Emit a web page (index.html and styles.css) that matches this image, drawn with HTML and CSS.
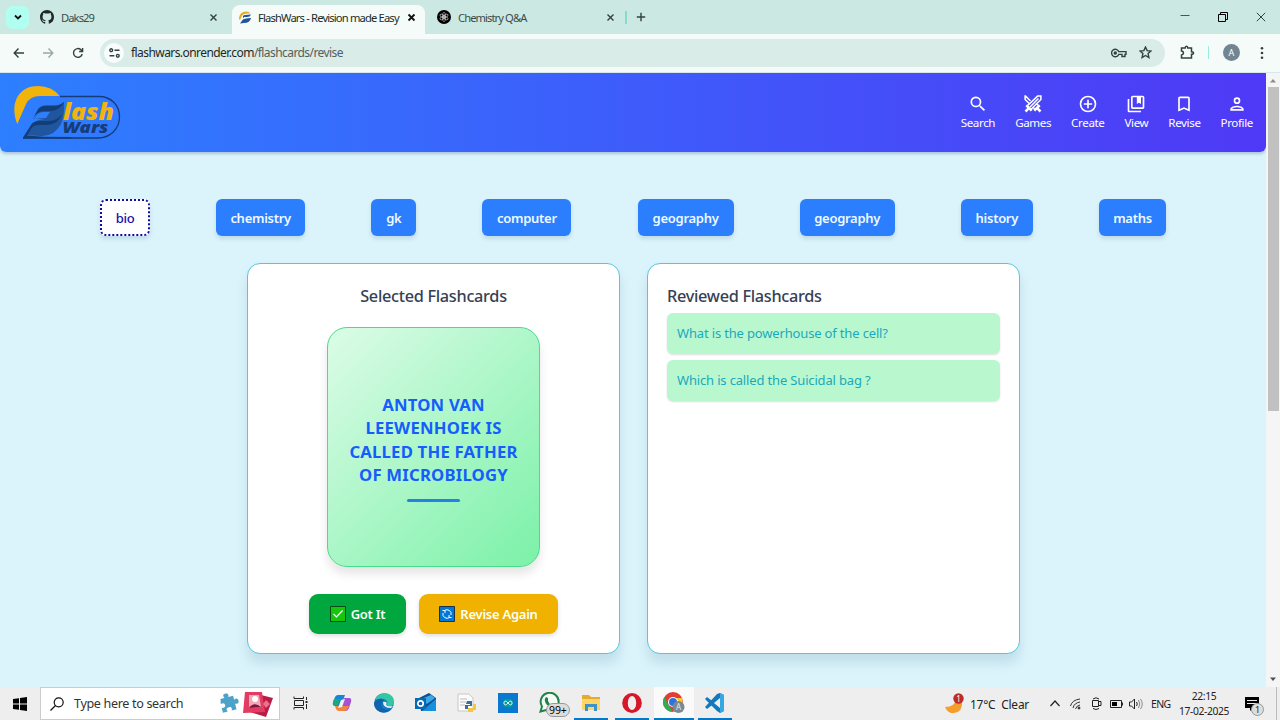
FILE: index.html
```html
<!DOCTYPE html>
<html lang="en">
<head>
<meta charset="utf-8">
<title>FlashWars - Revision made Easy</title>
<link rel="stylesheet" href="styles.css">
</head>
<body>
<div class="screen">
  <header class="tabstrip">
    <div class="tab-menu"><svg width="10" height="10" viewBox="0 0 10 10" class="line thick"><path d="M2 3.5 5 6.5 8 3.5"/></svg></div>
    <div class="tab tab-first">
      <svg width="14" height="14" viewBox="0 0 16 16"><path fill="#1f2928" d="M8 0C3.58 0 0 3.58 0 8c0 3.54 2.29 6.53 5.47 7.59.4.07.55-.17.55-.38 0-.19-.01-.82-.01-1.49-2.01.37-2.53-.49-2.69-.94-.09-.23-.48-.94-.82-1.13-.28-.15-.68-.52-.01-.53.63-.01 1.08.58 1.23.82.72 1.21 1.87.87 2.33.66.07-.52.28-.87.51-1.07-1.78-.2-3.64-.89-3.64-3.95 0-.87.31-1.59.82-2.15-.08-.2-.36-1.02.08-2.12 0 0 .67-.21 2.2.82a7.6 7.6 0 0 1 4 0c1.53-1.04 2.2-.82 2.2-.82.44 1.1.16 1.92.08 2.12.51.56.82 1.27.82 2.15 0 3.07-1.87 3.75-3.65 3.95.29.25.54.73.54 1.48 0 1.07-.01 1.93-.01 2.2 0 .21.15.46.55.38A8 8 0 0 0 16 8c0-4.42-3.58-8-8-8"/></svg>
      <span class="tab-title t-daks">Daks29</span>
      <svg class="line close" width="9" height="9" viewBox="0 0 9 9"><path d="M1.5 1.5 7.5 7.5M7.5 1.5 1.5 7.5"/></svg>
    </div>
    <div class="tab tab-active">
      <svg width="13" height="13" viewBox="0 0 13 13"><path fill="#e5ae29" d="M0 8C0 2 5-1 10 1L11 2.500Q5 2 3.500 4L1 9Z"/><path fill="#24549b" d="M4 5Q5 3.500 12 3.500 11 6 8 6H5L4 7.500ZM1 12.500 3.500 9Q4.500 7.500 12 7 11 12 5 12Z"/></svg>
      <span class="tab-title t-flash">FlashWars - Revision made Easy</span>
      <svg class="line close thick" width="9" height="9" viewBox="0 0 9 9"><path d="M1.5 1.5 7.5 7.5M7.5 1.5 1.5 7.5"/></svg>
    </div>
    <div class="tab tab-last">
      <svg width="14" height="14" viewBox="0 0 14 14"><circle cx="7" cy="7" r="7" fill="#000"/><g fill="none" stroke="#ccc" stroke-width=".6"><ellipse cx="7" cy="5.400" rx="1.500" ry="3"/><ellipse cx="7" cy="5.400" rx="1.500" ry="3" transform="rotate(60 7 7)"/><ellipse cx="7" cy="5.400" rx="1.500" ry="3" transform="rotate(120 7 7)"/><ellipse cx="7" cy="5.400" rx="1.500" ry="3" transform="rotate(180 7 7)"/><ellipse cx="7" cy="5.400" rx="1.500" ry="3" transform="rotate(240 7 7)"/><ellipse cx="7" cy="5.400" rx="1.500" ry="3" transform="rotate(300 7 7)"/></g></svg>
      <span class="tab-title t-chem">Chemistry Q&amp;A</span>
      <svg class="line close" width="9" height="9" viewBox="0 0 9 9"><path d="M1.5 1.5 7.5 7.5M7.5 1.5 1.5 7.5"/></svg>
    </div>
    <i class="tab-sep"></i>
    <svg class="line new-tab" width="10" height="10" viewBox="0 0 10 10"><path d="M5 .8V9.2M.8 5H9.2"/></svg>
    <div class="window-buttons">
      <svg width="10" height="10" viewBox="0 0 10 10" fill="none" stroke="#485653"><path d="M.5 3.5H9.5"/></svg>
      <svg width="10" height="10" viewBox="0 0 10 10" fill="none" stroke="#000"><path d="M.5 2.500H7.500V9.500H.5ZM2.500 2.500V.5H9.500V7.500H7.500"/></svg>
      <svg width="10" height="10" viewBox="0 0 10 10" fill="none" stroke="#35413f"><path d="M.8.8 9.2 9.2M9.2.8.8 9.2"/></svg>
    </div>
  </header>

  <div class="toolbar">
    <svg class="line" width="12" height="12" viewBox="0 0 12 12"><path d="M11 6H1.5M5.5 1.5 1.2 6 5.5 10.5"/></svg>
    <svg class="line faded" width="12" height="12" viewBox="0 0 12 12"><path d="M1 6H10.5M6.5 1.5 10.8 6 6.5 10.5"/></svg>
    <svg class="line reload" width="12" height="12" viewBox="0 0 12 12"><path d="M10.2 7A4.4 4.4 0 1 1 9 2.8L10.4 4.2M10.6 1V4.5H7.1"/></svg>
    <div class="omnibox">
      <div class="site-info"><svg class="line" width="11" height="10" viewBox="0 0 11 10"><circle cx="2.2" cy="2.2" r="1.4"/><path d="M5.5 2.2H10.5M.5 7.8H5.3"/><circle cx="8.8" cy="7.8" r="1.4"/></svg></div>
      <span class="url">flashwars.onrender.com<span>/flashcards/revise</span></span>
      <svg class="line key" width="16" height="10" viewBox="0 0 16 10"><path d="M7.7 3.6A3.700 3.700 0 1 0 7.7 6.4H11V8.5H14V6.4H15V3.6Z"/><circle cx="4.3" cy="5" r="1" fill="#33413e"/></svg>
      <svg class="line" width="13" height="13" viewBox="0 0 13 13"><path d="m6.5 1 1.6 3.6 3.9.4-2.9 2.6.8 3.9-3.4-2-3.4 2 .8-3.9L1 5l3.9-.4Z"/></svg>
    </div>
    <svg class="line ext" width="15" height="15" viewBox="0 0 15 15"><path stroke-width="1.500" d="M1.500 3H5.200Q5.200 1.200 6.500 1.200T7.800 3H11.500V6.700Q13.500 6.700 13.500 8T11.500 9.300V13H1.500V9.900Q3.500 9.600 3.500 8T1.500 6.100Z"/></svg>
    <i class="tool-sep"></i>
    <b class="avatar">A</b>
    <svg class="dots" width="4" height="14" viewBox="0 0 4 14" fill="#33413e"><circle cx="2" cy="2.2" r="1.3"/><circle cx="2" cy="7" r="1.3"/><circle cx="2" cy="11.8" r="1.3"/></svg>
  </div>

  <div class="viewport">
    <main class="page">
      <nav class="navbar">
        <svg class="logo" width="110" height="56" viewBox="0 0 110 56">
          <path fill="#f2b40b" d="M5.300 40C-2 23 4 2 26 2Q40 2 47.500 12H28Q18 12 14 20Z"/>
          <path fill="none" stroke="#143c78" stroke-width="1.300" d="M48 12.500H87C99 12.500 107.500 21 107.500 33S98 54 86 54H11"/>
          <path fill="#20569e" d="M14 51 22 39Q24 36 32 35H22L28 26 45 24.500 52 18Q53 30 49 40 42 53 28 52Z"/>
          <path fill="#2d7ffb" d="M22 36 25 30.500Q27 28 31 28H38L34 34Q24 34 22 36Z"/>
          <path fill="#123d79" d="M20.500 35.500 25.500 26Q28 21.500 34 21.500H43Q48 21.500 52.500 17.500 48 26 40 27H32Q25 27 20.500 35.500ZM11 53.500 19 41Q21 37 28 37H37Q45 37 50 30 46 41 35 41H27Q21 41 19 45L15 51.500 32 52.800 60 53 58 54.500H11Z"/>
          <text x="51" y="36" textLength="51" lengthAdjust="spacingAndGlyphs" class="logo-text" font-size="23" fill="#f2b40b">lash</text>
          <text x="50.500" y="49.300" textLength="46" lengthAdjust="spacingAndGlyphs" class="logo-text" font-size="16" fill="#173d78">Wars</text>
        </svg>
        <div class="nav-links">
          <a><svg viewBox="0 0 24 24"><path d="M15.500 14h-.79l-.28-.27A6.500 6.500 0 1 0 13.730 14.430l.27.28v.79l5 4.990L20.490 19zm-6 0a4.500 4.500 0 1 1 0-9 4.500 4.500 0 0 1 0 9"/></svg><span>Search</span></a>
          <a><svg viewBox="0 0 24 24"><g fill="none" stroke="#fff" stroke-width="1.800"><path d="M6 13.500 17.500 2.500H21.500V6.500L10 18M18 13.500 15.500 11M9 8.500 3 2.500H2.500V6.500L8 12M14 18 11.500 15.500M8.500 15.500 18.500 5.500"/><path stroke-width="3" d="M4 13.500 10.500 20M20 13.500 13.500 20M7 17 3 21M17 17 21 21"/></g></svg><span>Games</span></a>
          <a><svg viewBox="0 0 24 24"><path d="M13 7h-2v4H7v2h4v4h2v-4h4v-2h-4zm-1-5a10 10 0 1 0 0 20 10 10 0 0 0 0-20m0 18a8 8 0 1 1 0-16 8 8 0 0 1 0 16"/></svg><span>Create</span></a>
          <a><svg viewBox="0 0 24 24"><path d="M4 6H2v14c0 1.100.9 2 2 2h14v-2H4zM20 2H8c-1.100 0-2 .9-2 2v12c0 1.100.9 2 2 2h12c1.100 0 2-.9 2-2V4c0-1.100-.9-2-2-2m0 14H8V4h12zM13 4h5v8l-2.500-1.500L13 12z"/></svg><span>View</span></a>
          <a><svg viewBox="0 0 24 24"><path d="M17 3H7c-1.100 0-2 .9-2 2v16l7-3 7 3V5c0-1.100-.9-2-2-2m0 15-5-2.180L7 18V5h10z"/></svg><span>Revise</span></a>
          <a><svg viewBox="0 0 24 24"><path d="M12 6a2 2 0 1 1 0 4 2 2 0 0 1 0-4m0 10c2.700 0 5.800 1.290 6 2H6c.23-.72 3.310-2 6-2m0-12a4 4 0 1 0 0 8 4 4 0 0 0 0-8m0 10c-2.670 0-8 1.340-8 4v2h16v-2c0-2.660-5.330-4-8-4"/></svg><span>Profile</span></a>
        </div>
      </nav>

      <div class="subjects">
        <button class="chip selected">bio</button><button class="chip">chemistry</button><button class="chip">gk</button><button class="chip">computer</button><button class="chip">geography</button><button class="chip">geography</button><button class="chip">history</button><button class="chip">maths</button>
      </div>

      <div class="panels">
        <section class="panel selected-panel">
          <h2 class="h-selected">Selected Flashcards</h2>
          <div class="flashcard">
            <p>ANTON VAN<br>LEEWENHOEK IS<br>CALLED THE FATHER<br>OF MICROBILOGY</p>
            <i></i>
          </div>
          <div class="actions">
            <button class="got"><svg width="16" height="16" viewBox="0 0 16 16"><path fill="#16c60c" stroke="#064b18" d="M.5.5H15.500V15.500H.5Z"/><path fill="none" stroke="#fff" stroke-width="1.200" d="M3.500 8 6.500 11 12.500 4.500"/></svg><span>Got It</span></button>
            <button class="again"><svg width="16" height="16" viewBox="0 0 16 16"><path fill="#0078d7" stroke="#19334a" d="M.5.5H15.500V15.500H.5Z"/><path fill="none" stroke="#fff" d="M5.500 4.500A4.200 4.200 0 0 1 12 9M10.500 11.500A4.200 4.200 0 0 1 4 7M3.500 4.500H6V7M12.500 11.500H10V9"/></svg><span>Revise Again</span></button>
          </div>
        </section>
        <section class="panel reviewed-panel">
          <h2 class="h-reviewed">Reviewed Flashcards</h2>
          <div class="reviewed q1">What is the powerhouse of the cell?</div>
          <div class="reviewed q2">Which is called the Suicidal bag ?</div>
        </section>
      </div>
    </main>
    <aside class="scrollbar">
      <svg width="8" height="5" viewBox="0 0 8 5"><path fill="#8b8b8b" d="M1 4.500 4 1 7 4.500Z"/></svg>
      <i></i>
      <svg class="down" width="8" height="5" viewBox="0 0 8 5"><path fill="#505050" d="M1 .5 4 4 7 .5Z"/></svg>
    </aside>
  </div>

  <footer class="taskbar">
    <div class="start"><svg width="14" height="14" viewBox="0 0 14 14"><path d="M0 2 6 1.200V6.600H0ZM7 1 14 0V6.600H7ZM0 7.400H6V12.800L0 12ZM7 7.400H14V14L7 13Z"/></svg></div>
    <div class="search">
      <svg width="14" height="14" viewBox="0 0 14 14" fill="none" stroke="#111" stroke-width="1.200"><circle cx="8.700" cy="5.300" r="4.500"/><path d="M5.500 8.500.5 13.500"/></svg>
      <span>Type here to search</span>
      <svg class="deco" width="56" height="28" viewBox="0 0 56 28"><path fill="#4da2c7" transform="rotate(-14 10 14)" d="M3 7H7Q5 3 9 3T11 7H16V11Q20 9 20 13T16 15V21H11Q13 17 9 17T7 21H2V16Q6 17 6 14T2 12Z"/><path fill="#b91d45" d="M34 3 54 8 47 27 31 22Z"/><path fill="#e23c62" d="M26 2 43 2 46 22 24 23Z"/><path fill="#f0a9b5" d="M30 5 40 5 42 17 30 18Z"/><circle cx="36" cy="9" r="3" fill="#fff"/><path fill="#7c1740" d="M30 18Q35 11 42 17Z"/><path fill="#ed718d" d="m47 10 4 4-4 4-3-4Z"/></svg>
    </div>
    <div class="apps">
      <div class="app"><svg width="15" height="14" viewBox="0 0 15 14" fill="none" stroke="#222"><path d="M1 .5V2.500H10.500V.5M1 13.500V11.500H10.500V13.500M1.500 4.500H10.500V9.500H1.500ZM13.500 1V4M13.500 8V13"/><path stroke-width="2" d="M13.500 5V7"/></svg></div>
      <div class="app"><svg width="20" height="18" viewBox="0 0 20 18"><path fill="#1687d8" d="M6 1H13L9 12H3Q0 12 1 8L3 3Q4 1 6 1Z"/><path fill="#19a97b" d="M2 5H8L6 11Q2 13 1 9Z"/><path fill="#a752d4" d="M12 4H17Q20 4 19 8L17 14Q16 17 13 17H7L11 6Z"/><path fill="#f4853d" d="M6 12H17Q15 17 12 17H7Q4 17 3 12Z"/><path fill="#edf3ef" d="m9 6 4-1-3 8-4 1Z"/></svg></div>
      <div class="app"><svg width="20" height="20" viewBox="0 0 20 20"><circle cx="10" cy="10" r="9.800" fill="#137ac6"/><path fill="#34c7a3" d="M1 7C4-2 19-2 20 8 20 14 15 14 12 12 16 9 11 3 1 7Z"/><path fill="#1261ac" d="M8 9C5 15 12 19 17 16 12 22 0 20 0 10 3 5 7 5 10 7Q8 7 8 9Z"/><path fill="#eee" d="M9 9Q9 15 17 15L19 13Q14 14 12 12Q14 8 9 9Z"/></svg></div>
      <div class="app"><svg width="21" height="19" viewBox="0 0 21 19"><path fill="#0e4f91" d="M4 5 14 0 21 5V18H6Z"/><path fill="#3aa9e8" d="M6 6 16 2 20 5 12 11Z"/><path fill="#1490df" d="M7 18 21 6V18Z"/><path fill="#0869b8" d="M0 5H11V16H0Z"/><circle cx="5.500" cy="10.500" r="2.700" fill="none" stroke="#fff" stroke-width="1.700"/></svg></div>
      <div class="app"><svg width="19" height="20" viewBox="0 0 19 20"><path fill="#fbfbfb" stroke="#c8c8c8" d="M1 1H12L16 5V18H1Z"/><path stroke="#bbb" d="M3 6H10M3 9H9M3 12H8"/><path fill="#376fa5" d="M10 8H15V13H11V16H8V12H13V11H9Z"/><path fill="#f2c742" d="M16 11H19V17H16V19H11V15H16Z"/></svg></div>
      <div class="app"><svg width="20" height="20" viewBox="0 0 20 20"><path fill="#0879cf" d="M0 0H20V20H0Z"/><rect x="5" y="6" width="10" height="8" rx="3" fill="#009b9b"/><path fill="none" stroke="#fff" d="M10 10C8 7 6 8 6 10S8 13 10 10 14 8 14 10 12 13 10 10"/></svg></div>
      <div class="app badge-host"><svg width="21" height="21" viewBox="0 0 21 21"><path fill="#f5faf5" stroke="#20834b" stroke-width="2" d="M1.500 19.500 3 14.500A9 9 0 1 1 7 18Z"/><path fill="#20834b" d="M7 5 9 6 9 9Q10 12 13 13L15 12 16 14Q13 18 8 13 4 8 7 5Z"/></svg><span class="badge">99+</span></div>
      <div class="app running"><svg width="20" height="18" viewBox="0 0 20 18"><path fill="#e7a92f" d="M1 1H8L10 3H19V15H1Z"/><path fill="#ffd566" d="M1 5H19V16H1Z"/><path fill="#3d93c9" d="M4 10H16V17H13V13H7V17H4Z"/></svg></div>
      <div class="app running"><svg width="20" height="20" viewBox="0 0 20 20"><ellipse cx="10" cy="10" rx="9.800" ry="10" fill="#d71729"/><ellipse cx="10" cy="10" rx="4.200" ry="7" fill="#eee"/></svg></div>
      <div class="app running current"><svg width="22" height="22" viewBox="0 0 22 22"><circle cx="10" cy="10" r="10" fill="#e13e32"/><path fill="#37a853" d="M1.300 5 10 20A10 10 0 0 1 1.300 5Z"/><path fill="#fbc52d" d="M10 6H19Q22 16 10 20L14 12Z"/><circle cx="10" cy="10" r="5" fill="#fff"/><circle cx="10" cy="10" r="4" fill="#2f72df"/><circle cx="15.500" cy="15" r="6" fill="#778a94"/><text x="15.500" y="18" text-anchor="middle" fill="#e5edef" font-size="8">A</text></svg></div>
      <div class="app running"><svg width="20" height="20" viewBox="0 0 20 20"><path fill="#1478bd" d="M0 6 2 4 15 14V6L2 16 0 14 12 1 15 0 19 2V18L15 20 12 18Z"/><path fill="#35a7e5" d="M15 0 19 2V18L15 20Z"/><path fill="#eee" d="m9 10 6-5V15Z"/></svg></div>
    </div>
    <div class="tray">
      <svg class="weather" width="22" height="22" viewBox="0 0 22 22"><path fill="#f59e2b" d="M14 4Q11 14 1 14 4 21 10 20 19 19 18 8Z"/><circle cx="14.500" cy="5.500" r="5.200" fill="#bd2d25"/><text x="14.500" y="8.500" text-anchor="middle" fill="#fff" font-size="8">1</text></svg>
      <span class="temp">17°C&nbsp; Clear</span>
      <svg class="chev" width="10" height="7" viewBox="0 0 10 7" fill="none" stroke="#222" stroke-width="1.200"><path d="M.5 6 5 1 9.500 6"/></svg>
      <svg class="wifi" width="11" height="12" viewBox="0 0 11 12" fill="none" stroke="#333"><path d="M.5 8Q2 2 10 1M3 10Q4 5 10 4M5.500 11Q6 8 10 7"/><circle cx="9" cy="10" r="1" fill="#333"/></svg>
      <svg class="usb" width="11" height="13" viewBox="0 0 11 13" fill="none" stroke="#222"><path d="M1.500 3.500H7.500V9.500H1.500ZM8 4.500H10V8.500H8M2 2Q5-.5 8 2M2 11.500Q5 13.500 8 11.500"/></svg>
      <svg class="battery" width="13" height="8" viewBox="0 0 13 8"><path fill="none" stroke="#222" d="M.5.5H11.500V7.500H.5ZM12.500 2.500V5.500"/><path d="M2 2H7V6H2Z"/></svg>
      <svg class="volume" width="14" height="12" viewBox="0 0 14 12" fill="none" stroke="#222"><path d="M.5 4H2.500L5.500 1V11L2.500 8H.5ZM7.500 4Q9 6 7.500 8"/><path stroke="#888" d="M9.500 2Q12 6 9.500 10M11.500 1Q15 6 11.500 11"/></svg>
      <span class="lang">ENG</span>
      <div class="clock"><span>22:15</span><span>17-02-2025</span></div>
      <div class="notify"><svg width="14" height="14" viewBox="0 0 14 14"><path d="M0 0H14V11H8L5 14V11H0Z"/><path stroke="#eee" d="M2 3.500H12M2 6.500H12"/></svg><span>1</span></div>
      <i class="edge"></i>
    </div>
  </footer>
</div>
</body>
</html>
```

FILE: styles.css
```css
* { box-sizing: border-box; }
body { margin: 0; font-family: "Noto Sans", sans-serif; color: #222; }
button { border: 0; padding: 0; font-family: inherit; }
svg { display: block; flex: none; }
.screen { width: 1280px; height: 720px; display: flex; flex-direction: column; overflow: hidden; white-space: nowrap; }
.line { fill: none; stroke: #33413e; stroke-width: 1.4; }
.thick { stroke: #111; stroke-width: 1.8; }

.tabstrip { height: 34px; display: flex; align-items: center; background: #cce8e2; flex: none; }
.tab-menu { width: 23px; height: 23px; margin-left: 6px; border-radius: 7px; background: #b1fff1; display: grid; place-items: center; flex: none; }
.tab { display: flex; align-items: center; flex: none; }
.tab-first { width: 203px; padding: 0 14px 0 11px; }
.tab-active { width: 193px; height: 29px; margin-top: 5px; padding: 0 9px 5px 7px; border-radius: 8px 8px 0 0; background: #f5fbf9; }
.tab-last { width: 204px; padding: 0 14px 0 12px; }
.tab-title { margin-left: 7px; font-size: 11px; color: #3b4d49; }
.tab-active .tab-title { color: #202b29; margin-left: 6px; }
.t-daks { letter-spacing: -.85px; }
.t-daks, .t-flash, .t-chem { font-size: 11.2px; }
.t-daks { letter-spacing: -.95px; }
.t-flash { letter-spacing: -.84px; }
.t-chem { letter-spacing: -.92px; }
.t-daks { letter-spacing: -.93px; }
.tab .close { margin-left: auto; }
.tab-sep { width: 2px; height: 13px; background: #83dccd; margin-left: -4px; }
.new-tab { margin-left: 9px; }
.window-buttons { margin: 0 14px 0 auto; display: flex; gap: 28px; }

.toolbar { height: 39px; flex: none; display: flex; align-items: center; padding: 0 16px 1px 13px; background: #f5fbf9; border-bottom: 1px solid #d8e9ee; }
.toolbar .faded { margin-left: 17px; stroke: #9aa8a5; }
.toolbar .reload { margin-left: 18px; }
.omnibox { width: 1065px; height: 28px; margin-left: 16px; border-radius: 14px; background: #daece7; display: flex; align-items: center; padding: 0 13px 0 4px; }
.site-info { width: 20px; height: 20px; border-radius: 50%; background: #f8fcfb; display: grid; place-items: center; }
.url { margin-left: 7px; font-size: 12px; letter-spacing: -.57px; color: #1d2826; }
.url span { color: #53605d; }
.key { margin: 0 12px 0 auto; }
.ext { margin-left: 15px; }
.tool-sep { width: 1px; height: 13px; background: #99ebdc; margin-left: 13px; }
.avatar { width: 17px; height: 17px; border-radius: 50%; background: #718692; color: #fff; font-size: 9px; font-weight: 400; line-height: 17px; text-align: center; margin-left: 14px; }
.dots { margin-left: auto; }

.viewport { height: 614px; display: flex; flex: none; background: #dbf4fb; }
.page { width: 1266px; }
.navbar { height: 79px; display: flex; justify-content: space-between; padding: 11px 13px 0 12px; border-radius: 0 0 6px 6px; background: linear-gradient(90deg, #2d7fff, #4f39f6); box-shadow: 0 2px 3px #2c518047; }
.logo-text { font-family: "Noto Sans", sans-serif; font-weight: 900; font-style: italic; }
.nav-links { display: flex; gap: 20px; padding-top: 10px; }
.nav-links a { display: flex; flex-direction: column; align-items: center; color: #fff; }
.nav-links svg { width: 20px; height: 20px; fill: #fff; }
.nav-links span { font-size: 11.6px; line-height: 18px; letter-spacing: -.38px; }

.subjects { width: 1066px; margin: 47px 0 0 100px; display: grid; grid-template-columns: 50px 89px 45px 89px 96px 95px 72px 67px; justify-content: space-between; }
.chip { height: 37px; border-radius: 6px; background: #2b7fff; color: #eff9ff; font-size: 13px; font-weight: 600; letter-spacing: -.28px; box-shadow: 0 3px 4px #24527026; }
.chip.selected { background: #fff; color: #1c0bae; border: 2px dotted #1709a0; font-weight: 500; }

.panels { display: flex; gap: 27px; margin: 27px 0 0 247px; }
.panel { width: 373px; height: 391px; background: #fff; border: 1px solid #5bc5d4; border-radius: 13px; box-shadow: 0 9px 12px #28688326; }
.panel h2 { margin: 0; font-size: 16.3px; line-height: 24px; font-weight: 500; color: #364153; }
.selected-panel { display: flex; flex-direction: column; align-items: center; padding-top: 20px; }
.h-selected, .h-reviewed { letter-spacing: -.3px; }
.flashcard { width: 213px; height: 240px; margin-top: 19px; border: 1px solid #48dc8b; border-radius: 20px; background: linear-gradient(135deg, #dcfce7, #7bf1a8); box-shadow: 0 7px 10px #0000001a; display: flex; flex-direction: column; align-items: center; padding-top: 65px; }
.flashcard p { margin: 0; text-align: center; color: #155dfc; font-size: 16.7px; font-weight: 700; line-height: 23.4px; letter-spacing: .2px; }
.flashcard i { width: 53px; height: 3px; margin-top: 12px; border-radius: 2px; background: #2680e8; }
.actions { display: flex; gap: 13px; margin-top: 27px; }
.actions button { height: 40px; border-radius: 9px; display: flex; align-items: center; justify-content: center; gap: 5px; color: #f7fff8; font-size: 13px; font-weight: 600; letter-spacing: -.25px; box-shadow: 0 2px 4px #0002; }
.actions .got { width: 97px; background: #00a63e; }
.actions .again { width: 139px; background: #f0b100; }
.reviewed-panel { padding: 20px 19px; }
.reviewed { height: 41px; border-radius: 6px; padding-left: 10px; line-height: 41px; background: #b9f8cf; color: #19a9bd; font-size: 13px; margin-bottom: 6px; box-shadow: 0 1px 2px #0002; }
.reviewed.q1 { margin-top: 5px; }
.q1, .q2 { letter-spacing: -.16px; }
.scrollbar { width: 14px; background: #f5f5f5; display: flex; flex-direction: column; align-items: center; padding: 5px 0; }
.scrollbar i { width: 11px; height: 324px; background: #c1c1c1; margin-top: 4px; }
.scrollbar .down { margin-top: auto; }

.taskbar { height: 33px; flex: none; display: flex; background: #eee; }
.start { width: 40px; display: grid; place-items: center; }
.search { width: 240px; border: 1px solid #ccc; background: #fff; display: flex; align-items: center; padding-left: 9px; }
.search span { margin-left: 10px; font-size: 12.6px; letter-spacing: -.35px; color: #333; }
.deco { margin: 0 4px 0 auto; }
.apps { display: flex; }
.app { width: 41.5px; display: grid; place-items: center; border-bottom: 2px solid transparent; }
.running { width: 34px; margin: 0 3.7px; border-bottom-color: #0878c6; }
.running + .running { margin-left: 3.3px; }
.running.current { width: 40px; margin: 0 .7px; background: #fafafa; }
.badge-host { position: relative; }
.badge { position: absolute; left: 17px; top: 16px; padding: 0 2px; border: 1px solid #999; border-radius: 7px; background: #ddd; color: #000; font-size: 10.5px; line-height: 12px; letter-spacing: -.1px; }
.tray { margin-left: auto; width: 336px; display: flex; align-items: center; color: #222; }
.temp { margin-left: 4px; width: 79px; font-size: 11.9px; letter-spacing: -.2px; }
.chev { margin-left: 1px; }
.wifi { margin-left: 10px; }
.usb { margin-left: 10px; }
.battery { margin-left: 8px; }
.volume { margin-left: 6px; }
.lang { margin-left: 8px; width: 20px; font-size: 10.5px; letter-spacing: -.6px; }
.clock { width: 52px; margin-left: 7px; display: flex; flex-direction: column; align-items: center; font-size: 10.3px; line-height: 15px; letter-spacing: -.35px; }
.notify { position: relative; margin-left: 15px; }
.notify span { position: absolute; left: 6px; top: 6px; width: 13px; height: 13px; border: 1px solid #999; border-radius: 50%; background: #ddd; font-size: 9px; line-height: 11px; text-align: center; }
.edge { width: 1px; height: 33px; background: #bbb; margin: 0 3px 0 auto; }
```
